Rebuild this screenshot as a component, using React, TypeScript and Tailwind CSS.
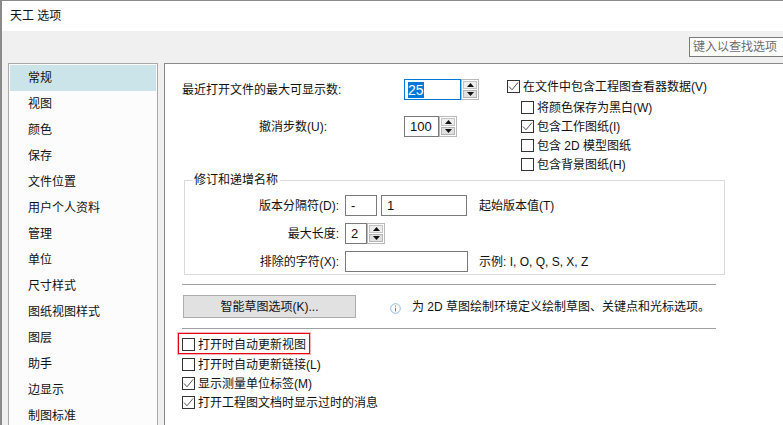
import React from 'react'

const navItems = ['常规', '视图', '颜色', '保存', '文件位置', '用户个人资料', '管理', '单位', '尺寸样式', '图纸视图样式', '图层', '助手', '边显示', '制图标准']

const CheckBox = ({ checked }: { checked?: boolean }) => (
  <span className="flex h-[13px] w-[13px] shrink-0 items-center justify-center border border-[#333333] bg-white">
    {checked && (
      <svg width="11" height="11" viewBox="0 0 11 11" fill="none" stroke="#555555" strokeWidth="1">
        <path d="M1 5.5 L4 8.8 L10 1.5" />
      </svg>
    )}
  </span>
)

const CheckRow = ({ label, checked, className = '' }: { label: string; checked?: boolean; className?: string }) => (
  <div className={`flex h-[19px] items-center gap-[3px] ${className}`}>
    <CheckBox checked={checked} />
    <span className="whitespace-nowrap">{label}</span>
  </div>
)

const Spinner = () => (
  <div className="flex h-[21px] w-[18px] shrink-0 flex-col gap-px border border-[#b9b9b9] bg-white p-px">
    <div className="flex flex-1 items-center justify-center border border-[#c4c4c4] bg-[#eeeeee]">
      <svg width="7" height="4" viewBox="0 0 7 4"><path d="M3.5 0 L7 4 H0 Z" fill="#111111" /></svg>
    </div>
    <div className="flex flex-1 items-center justify-center border border-[#b4b4b4] bg-[#e1e1e1]">
      <svg width="7" height="4" viewBox="0 0 7 4"><path d="M0 0 H7 L3.5 4 Z" fill="#111111" /></svg>
    </div>
  </div>
)

const App = () => {
  return (
    <div className="flex h-[425px] w-[783px] flex-col overflow-hidden border-t border-l-2 border-r-0 border-[#8a8a8a] bg-white font-['Liberation_Sans','Noto_Sans_CJK_SC',sans-serif] text-[12px] leading-[16px] text-[#111111]">
      {/* Title bar */}
      <div className="flex h-[30px] shrink-0 items-center pl-2">天工 选项</div>

      {/* Toolbar */}
      <div className="flex h-[32px] shrink-0 items-start justify-end bg-[#f0f0f0] pt-[6px]">
        <div className="flex h-[20px] w-[94px] items-center border border-r-0 border-[#7a7a7a] bg-white pl-[3px] text-[#6d6d6d]">
          键入以查找选项
        </div>
      </div>

      <div className="flex min-h-0 flex-1 bg-[#f0f0f0]">
        {/* Left nav */}
        <div className="ml-[6px] w-[150px] shrink-0 border border-b-0 border-[#a9a9a9] bg-[#fcfcfc] p-px">
          {navItems.map((item, i) => (
            <div key={item} className={`flex h-[26px] items-center pl-[18px] ${i === 0 ? 'bg-[#cbe4ea]' : ''}`}>
              {item}
            </div>
          ))}
        </div>

        {/* Options panel */}
        <div className="ml-[6px] flex-1 border-t border-l border-[#8a8a8a] bg-white pl-[18px] pt-[15px]">
          <div className="flex">
            <div className="w-[324px] shrink-0">
              <div className="flex h-[21px] items-center">
                <span className="-ml-px w-[222px]">最近打开文件的最大可显示数:</span>
                <div className="flex h-[21px] w-[57px] items-center border border-[#0078d4] pl-[3px] text-[14px]">
                  <span className="bg-[#0078d7] text-white">25</span>
                </div>
                <Spinner />
              </div>
              <div className="mt-[16px] flex h-[21px] items-center">
                <span className="-ml-px w-[222px] pl-[77px]">撤消步数(U):</span>
                <div className="flex h-[21px] w-[35px] items-center border border-[#7a7a7a] pl-[5px] text-[13px]">100</div>
                <Spinner />
              </div>
            </div>
            <div className="-mt-[2px]">
              <CheckRow label="在文件中包含工程图查看器数据(V)" checked />
              <div className="ml-[14px] mt-[2px]">
                <CheckRow label="将颜色保存为黑白(W)" />
                <CheckRow label="包含工作图纸(I)" checked />
                <CheckRow label="包含 2D 模型图纸" />
                <CheckRow label="包含背景图纸(H)" />
              </div>
            </div>
          </div>

          {/* Revision group */}
          <fieldset className="-mt-[2px] ml-px h-[103px] w-[541px] border border-[#d9d9d9] pl-[8px]">
            <legend className="-ml-px px-[2px]">修订和递增名称</legend>
            <div className="mt-[7px] flex h-[21px] items-center">
              <span className="w-[152px] pr-[6px] text-right">版本分隔符(D):</span>
              <div className="flex h-[21px] w-[32px] items-center border border-[#7a7a7a] pl-[5px] text-[13px]">-</div>
              <div className="ml-[4px] flex h-[21px] w-[86px] items-center border border-[#7a7a7a] pl-[5px] text-[13px]">1</div>
              <span className="ml-[12px]">起始版本值(T)</span>
            </div>
            <div className="mt-[7px] flex h-[21px] items-center">
              <span className="w-[152px] pr-[6px] text-right">最大长度:</span>
              <div className="flex h-[21px] w-[22px] items-center border border-[#7a7a7a] pl-[5px] text-[13px]">2</div>
              <Spinner />
            </div>
            <div className="mt-[7px] flex h-[21px] items-center">
              <span className="w-[152px] pr-[6px] text-right">排除的字符(X):</span>
              <div className="h-[21px] w-[123px] border border-[#7a7a7a]" />
              <span className="ml-[11px]">示例: I, O, Q, S, X, Z</span>
            </div>
          </fieldset>

          {/* Sketch options */}
          <div className="-ml-px mt-[9px] flex h-[45px] w-[534px] items-center border-y border-[#a0a0a0]">
            <div className="ml-px flex h-[23px] w-[173px] items-center justify-center border border-[#adadad] bg-[#e1e1e1]">
              智能草图选项(K)...
            </div>
            <svg className="ml-[34px] mt-[4px]" width="11" height="11" viewBox="0 0 11 11" fill="none">
              <circle cx="5.5" cy="5.5" r="4.8" stroke="#8fbbdd" />
              <path d="M5.5 2.5 V3.6 M5.5 4.8 V8.4" stroke="#4a7ea8" />
            </svg>
            <span className="ml-[11px] whitespace-nowrap">为 2D 草图绘制环境定义绘制草图、关键点和光标选项。</span>
          </div>

          {/* Update options */}
          <div className="relative -ml-px mt-[5px] w-fit">
            <CheckRow label="打开时自动更新视图" className="h-[21px] pr-[4px]" />
            <div className="absolute -left-[4px] -top-[1px] h-[21px] w-[132px] border border-[#e3000f] shadow-[0_0_0_1px_rgba(227,0,15,0.3)]" />
          </div>
          <div className="-ml-px">
            <CheckRow label="打开时自动更新链接(L)" />
            <CheckRow label="显示测量单位标签(M)" checked />
            <CheckRow label="打开工程图文档时显示过时的消息" checked />
          </div>
        </div>
      </div>
    </div>
  )
}

export default App
